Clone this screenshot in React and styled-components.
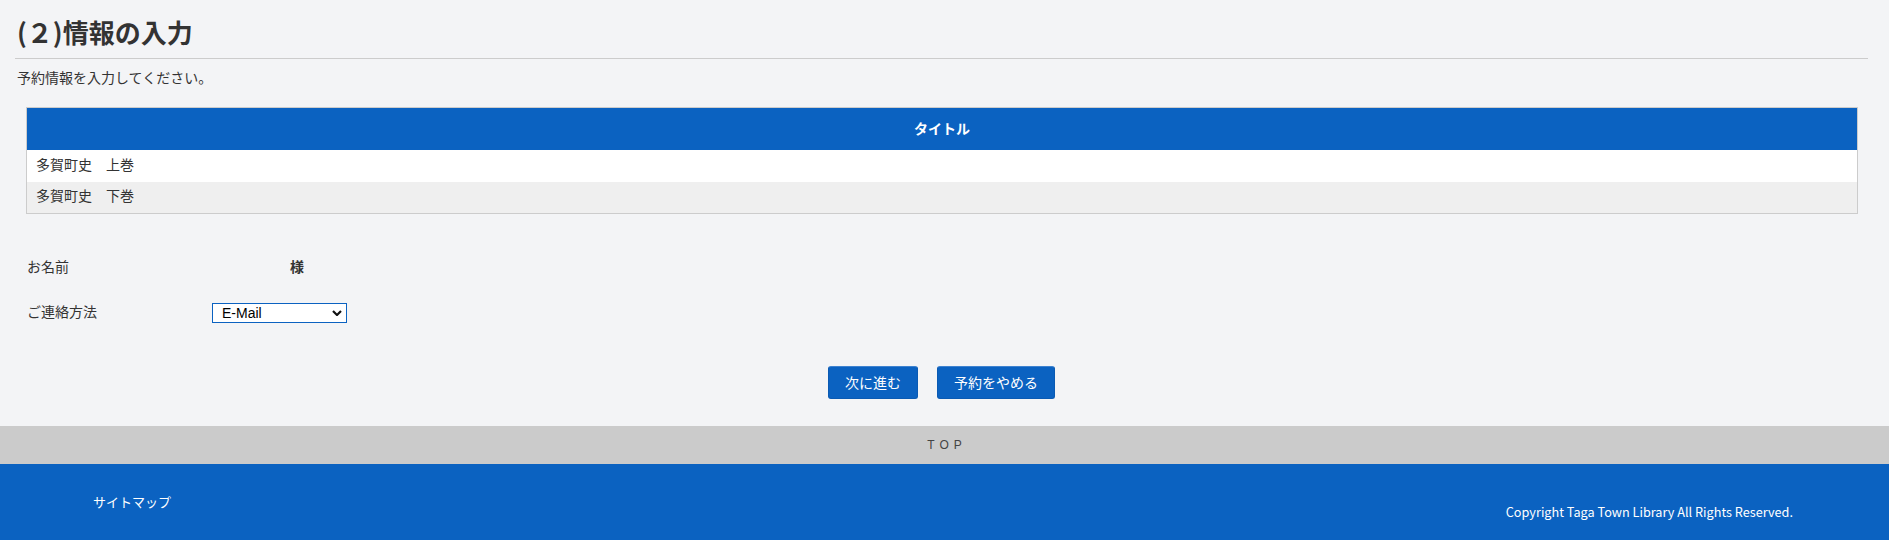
import styled, { createGlobalStyle } from 'styled-components'
import { useState } from 'react'

const GlobalStyle = createGlobalStyle`
    html, body {
        margin: 0;
        padding: 0;
        background: #ffffff;
    }
    body {
        font-family: "Noto Sans CJK JP", "Noto Sans", sans-serif;
        color: #333333;
    }
`

const books = ['多賀町史　上巻', '多賀町史　下巻']

function App() {
    const [contact, setContact] = useState('mail')

    return (
        <Page>
            <GlobalStyle />
            <Main>
                <Heading>(２)情報の入力</Heading>
                <Lead>予約情報を入力してください。</Lead>

                <BookTable>
                    <thead>
                        <tr>
                            <th>タイトル</th>
                        </tr>
                    </thead>
                    <tbody>
                        {books.map((title, i) => (
                            <BookRow key={title} $odd={i % 2 === 1}>
                                <td>{title}</td>
                            </BookRow>
                        ))}
                    </tbody>
                </BookTable>

                <Form>
                    <Field>
                        <Label>お名前</Label>
                        <Value>
                            <Honorific>様</Honorific>
                        </Value>
                    </Field>
                    <Field>
                        <Label>ご連絡方法</Label>
                        <Value>
                            <SelectWrap>
                                <Select value={contact} onChange={(e) => setContact(e.target.value)}>
                                    <option value="mail">E-Mail</option>
                                    <option value="tel">電話</option>
                                </Select>
                                <Chevron viewBox="0 0 10 6" aria-hidden="true">
                                    <path d="M1 1 L5 5 L9 1" />
                                </Chevron>
                            </SelectWrap>
                        </Value>
                    </Field>
                </Form>

                <Actions>
                    <Button type="button">次に進む</Button>
                    <Button type="button">予約をやめる</Button>
                </Actions>
            </Main>

            <TopBar>TOP</TopBar>

            <Footer>
                <FooterLink>サイトマップ</FooterLink>
                <Copyright>Copyright Taga Town Library All Rights Reserved.</Copyright>
            </Footer>
        </Page>
    )
}

const Page = styled.div`
    width: 100%;
    background: #f3f4f6;
`

const Main = styled.main`
    padding: 0 21px 27px 15px;
`

const Heading = styled.h2`
    margin: 0;
    padding: 14px 2px 8px;
    font-size: 26px;
    line-height: 36px;
    font-weight: bold;
    color: #333333;
    border-bottom: 1px solid #cccccc;
`

const Lead = styled.p`
    margin: 8px 0 0;
    padding-left: 2px;
    font-size: 14px;
    line-height: 20px;
`

const BookTable = styled.table`
    width: calc(100% - 21px);
    margin: 20px 10px 0 11px;
    border-collapse: collapse;
    border: 1px solid #cccccc;

    th {
        box-sizing: border-box;
        height: 42px;
        padding: 0 0 2px;
        background: #0b62c1;
        color: #ffffff;
        font-size: 14px;
        font-weight: bold;
        text-align: center;
    }

    td {
        box-sizing: border-box;
        height: 32px;
        padding: 0 9px 4px;
        font-size: 14px;
        text-align: left;
    }
`

const BookRow = styled.tr`
    background: ${(p) => (p.$odd ? '#efefef' : '#ffffff')};
`

const Form = styled.div`
    margin-top: 31px;
    padding-left: 12px;
    display: flex;
    flex-direction: column;
`

const Field = styled.div`
    display: grid;
    grid-template-columns: 185px 1fr;
    align-items: center;
    height: 45px;
`

const Label = styled.div`
    font-size: 14px;
    padding-bottom: 3px;
`

const Value = styled.div`
    display: flex;
    align-items: center;
`

const Honorific = styled.span`
    margin-left: 78px;
    padding-bottom: 4px;
    font-size: 14px;
    font-weight: bold;
`

const SelectWrap = styled.span`
    position: relative;
    display: inline-block;
`

const Select = styled.select`
    appearance: none;
    width: 135px;
    height: 20px;
    padding: 0 0 0 9px;
    border: 1px solid #0b62c1;
    border-radius: 0;
    background: #ffffff;
    font-family: "Liberation Sans", Arial, sans-serif;
    font-size: 14px;
    color: #000000;
    outline: none;
    display: block;
`

const Chevron = styled.svg`
    position: absolute;
    right: 5px;
    top: 7px;
    width: 10px;
    height: 6px;
    pointer-events: none;

    path {
        fill: none;
        stroke: #111111;
        stroke-width: 2.2;
    }
`

const Actions = styled.div`
    margin-top: 31px;
    display: flex;
    justify-content: center;
    gap: 19px;
`

const Button = styled.button`
    height: 33px;
    padding: 0 16px 2px;
    border: 1px solid #0a5ab3;
    border-top-color: #3d82d0;
    border-radius: 3px;
    background: #0b62c1;
    color: #ffffff;
    font-family: inherit;
    font-size: 14px;
    cursor: pointer;

    &:hover {
        background: #0a56a9;
    }
`

const TopBar = styled.div`
    height: 38px;
    display: flex;
    align-items: center;
    justify-content: center;
    background: #cbcbcb;
    color: #444444;
    font-family: "Liberation Sans", Arial, sans-serif;
    font-size: 12px;
    letter-spacing: 5px;
    padding-left: 5px;
`

const Footer = styled.footer`
    height: 76px;
    padding: 0 96px 0 93px;
    display: flex;
    justify-content: space-between;
    background: #0b62c1;
    color: #ffffff;
`

const FooterLink = styled.a`
    margin-top: 28px;
    font-size: 13px;
    line-height: 20px;
    height: 20px;
`

const Copyright = styled.p`
    margin: 0;
    align-self: flex-end;
    padding-bottom: 18px;
    font-size: 12.7px;
    line-height: 20px;
`

export default App
